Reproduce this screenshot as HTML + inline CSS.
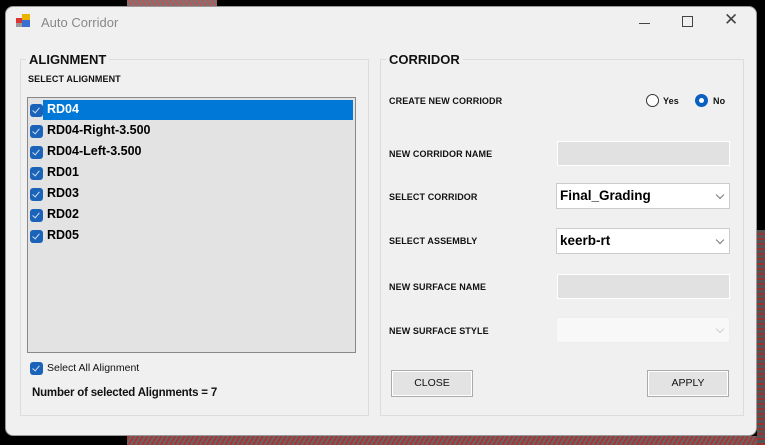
<!DOCTYPE html>
<html><head><meta charset="utf-8"><style>
*{box-sizing:border-box;margin:0;padding:0}
body{width:765px;height:445px;background:#000;position:relative;overflow:hidden;font-family:"Liberation Sans",sans-serif}
.cad1{position:absolute;left:127px;top:0;width:90px;height:7px;background:repeating-linear-gradient(60deg,#b55 0 2px,#777 2px 4px)}
.cad2{position:absolute;left:127px;top:436px;width:640px;height:9px;background:repeating-linear-gradient(-60deg,#a33 0 2px,#666 2px 4px)}
.cad3{position:absolute;left:757px;top:230px;width:8px;height:215px;background:repeating-linear-gradient(0deg,#933 0 2px,#555 2px 5px)}
.win{position:absolute;left:5px;top:6px;width:752px;height:430px;background:#f0f0f0;border-radius:8px;border:1px solid #999}
.abs{position:absolute}
.title{left:35px;top:8px;font-size:13px;color:#888}
.grp{position:absolute;border:1px solid #dcdcdc}
.gt{position:absolute;background:#f0f0f0;font-weight:bold;font-size:13px;color:#111;padding:0 3px}
.lbl{position:absolute;font-size:9px;font-weight:bold;color:#111;letter-spacing:.1px}
.list{position:absolute;left:21px;top:90px;width:329px;height:256px;background:#e3e3e3;border:1px solid #888}
.row{position:absolute;left:0;height:21px;width:325px;font-weight:bold;font-size:12.5px;color:#000}
.row span{position:absolute;left:15px;top:1px;height:20px;line-height:19px;padding-left:4px}
.cb{position:absolute;left:2px;top:5px;width:13px;height:13px;background:#1a63b8;border-radius:3px}
.cb:after{content:"";position:absolute;left:4px;top:2px;width:3px;height:6px;border:solid #cfe0f5;border-width:0 1px 1px 0;transform:rotate(40deg)}
.box{position:absolute;left:551px;width:173px;height:25px;background:#e1e1e1;border:1px solid #fff}
.combo{position:absolute;left:550px;width:174px;height:26px;background:#fff;border:1px solid #ccc;font-weight:bold;font-size:13.5px;padding:4px 3px}
.arr{position:absolute;right:6px;top:8px;width:6px;height:6px;border:solid #777;border-width:0 1px 1px 0;transform:rotate(45deg)}
.btn{position:absolute;top:363px;width:82px;height:27px;background:#e3e3e3;border:1px solid #aaa;box-shadow:inset 0 0 0 1px #fff;font-size:10.5px;color:#111;text-align:center;line-height:25px}
</style></head><body>
<div class="cad1"></div><div class="cad2"></div><div class="cad3"></div>
<div class="win">
<svg class="abs" style="left:10px;top:7px" width="15" height="14"><rect x="0" y="4" width="7" height="6" fill="#d33"/><rect x="6" y="0" width="8" height="6" fill="#e8b400"/><rect x="6" y="6" width="8" height="7" fill="#3a6fd0"/><rect x="0" y="9" width="6" height="4" fill="#999"/></svg>
<div class="abs title">Auto Corridor</div>
<div class="abs" style="left:633px;top:16px;width:11px;border-top:1px solid #444"></div>
<div class="abs" style="left:676px;top:9px;width:11px;height:11px;border:1px solid #444"></div>
<div class="abs" style="left:718px;top:3px;font-size:17px;color:#444">✕</div>

<div class="grp" style="left:14px;top:52px;width:349px;height:357px"></div>
<div class="gt" style="left:20px;top:45px">ALIGNMENT</div>
<div class="lbl" style="left:22px;top:67px">SELECT ALIGNMENT</div>
<div class="list">
<div class="row" style="top:1px"><div class="cb"></div><span style="background:#0078d7;color:#fff;width:310px;left:15px;padding-left:4px">RD04</span></div>
<div class="row" style="top:22px"><div class="cb"></div><span>RD04-Right-3.500</span></div>
<div class="row" style="top:43px"><div class="cb"></div><span>RD04-Left-3.500</span></div>
<div class="row" style="top:64px"><div class="cb"></div><span>RD01</span></div>
<div class="row" style="top:85px"><div class="cb"></div><span>RD03</span></div>
<div class="row" style="top:106px"><div class="cb"></div><span>RD02</span></div>
<div class="row" style="top:127px"><div class="cb"></div><span>RD05</span></div>
</div>
<div class="cb" style="left:24px;top:355px"></div>
<div class="abs" style="left:41px;top:355px;font-size:10.5px;color:#111">Select All Alignment</div>
<div class="abs" style="left:26px;top:380px;font-size:11.5px;font-weight:bold;color:#111;letter-spacing:-.2px">Number of selected Alignments = 7</div>

<div class="grp" style="left:374px;top:52px;width:364px;height:357px"></div>
<div class="gt" style="left:380px;top:45px">CORRIDOR</div>
<div class="lbl" style="left:383px;top:89px">CREATE NEW CORRIODR</div>
<div class="abs" style="left:640px;top:87px;width:13px;height:13px;border-radius:50%;border:1px solid #333;background:#fff"></div>
<div class="lbl" style="left:657px;top:89px">Yes</div>
<div class="abs" style="left:689px;top:87px;width:13px;height:13px;border-radius:50%;background:#0a5fc0"><div style="position:absolute;left:4px;top:4px;width:5px;height:5px;border-radius:50%;background:#fff"></div></div>
<div class="lbl" style="left:707px;top:89px">No</div>
<div class="lbl" style="left:383px;top:142px">NEW CORRIDOR NAME</div>
<div class="box" style="top:134px"></div>
<div class="lbl" style="left:383px;top:185px">SELECT CORRIDOR</div>
<div class="combo" style="top:176px">Final_Grading<div class="arr"></div></div>
<div class="lbl" style="left:383px;top:229px">SELECT ASSEMBLY</div>
<div class="combo" style="top:221px">keerb-rt<div class="arr"></div></div>
<div class="lbl" style="left:383px;top:275px">NEW SURFACE NAME</div>
<div class="box" style="top:267px"></div>
<div class="lbl" style="left:383px;top:319px">NEW SURFACE STYLE</div>
<div class="combo" style="top:310px;background:#f8f8f8;border-color:#eee"><div class="arr" style="border-color:#ccc"></div></div>
<div class="btn" style="left:385px">CLOSE</div>
<div class="btn" style="left:641px">APPLY</div>
</div>
</body></html>
